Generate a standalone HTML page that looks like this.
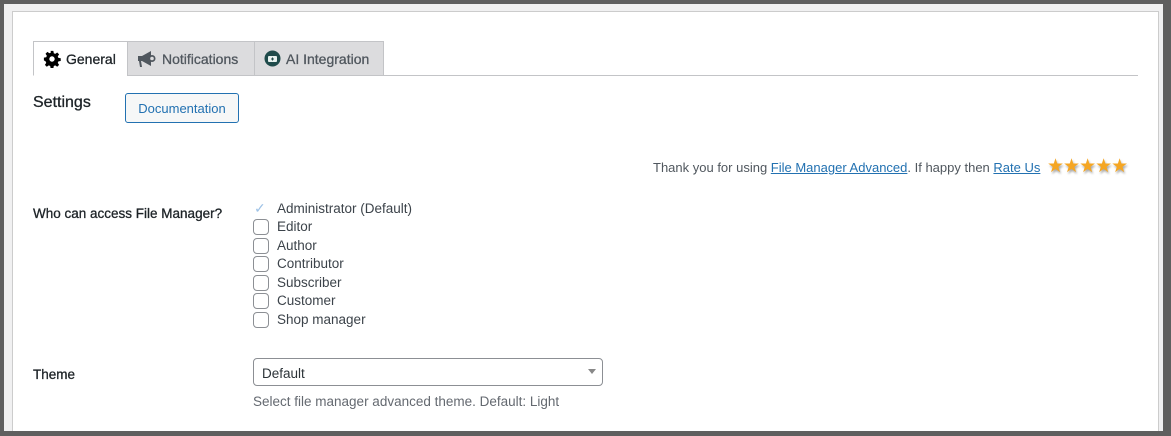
<!DOCTYPE html>
<html><head><style>
*{box-sizing:border-box;margin:0;padding:0}
html,body{width:1171px;height:436px;overflow:hidden}
body{background:#5f5f5f;font-family:"Liberation Sans",sans-serif;font-size:13px;color:#3c434a;position:relative}
.bg{position:absolute;left:4px;top:4px;width:1159px;height:427px;background:#f0f0f1;overflow:hidden}
.panel{position:absolute;left:8px;top:7px;width:1147px;height:430px;background:#fff;border:1px solid #ccc}
.tabline{position:absolute;left:33px;top:75px;width:1105px;height:1px;background:#c3c4c7}
.tab{position:absolute;top:41px;height:35px;border:1px solid #c3c4c7;background:#dcdcde;font-size:14px;color:#50575e;display:flex;align-items:center;padding-left:9px;gap:5px}
.tab.act{background:#fff;border-bottom-color:#fff;color:#1d2327}
.abs{position:absolute}
.btn{position:absolute;left:125px;top:93px;width:114px;height:30px;border:1px solid #2271b1;border-radius:3px;background:#f6f7f7;color:#2271b1;font-size:13px;display:flex;align-items:center;justify-content:center}
.cb{position:absolute;left:253px;width:16px;height:16px;border:1px solid #8c8f94;border-radius:4px;background:#fff}
.lbl{position:absolute;left:277px;font-size:13.5px;color:#3c434a}
.h{position:absolute;left:33px;font-size:13.5px;color:#1d2327;-webkit-text-stroke:0.3px #1d2327}
a{color:#2271b1}
</style></head><body>
<div class="bg"><div class="panel"></div></div>
<div class="tabline"></div>
<div class="tab act" style="left:33px;width:95px"><svg width="18" height="18" viewBox="0 0 20 20"><path fill="#000" d="M8.5 1h3l.5 2.6 1.6.7 2.2-1.5 2.1 2.1-1.5 2.2.7 1.6 2.6.5v3l-2.6.5-.7 1.6 1.5 2.2-2.1 2.1-2.2-1.5-1.6.7-.5 2.6h-3l-.5-2.6-1.6-.7-2.2 1.5-2.1-2.1 1.5-2.2-.7-1.6L1 11.5v-3l2.6-.5.7-1.6-1.5-2.2 2.1-2.1 2.2 1.5 1.6-.7zM10 7a3 3 0 100 6 3 3 0 000-6z"/></svg><span style="-webkit-text-stroke:0.3px #1d2327">General</span></div>
<div class="tab" style="left:127px;width:128px"><svg width="20" height="18" viewBox="0 0 20 18"><path fill="#50575e" d="M1 6h4l9-5v15l-9-5H4l1 6H3l-1-6H1z"/><circle cx="15" cy="8.5" r="3.5" fill="#50575e"/><circle cx="15" cy="8.5" r="1.8" fill="#dcdcde"/></svg><span style="-webkit-text-stroke:0.3px #50575e">Notifications</span></div>
<div class="tab" style="left:254px;width:130px"><svg width="17" height="17" viewBox="0 0 17 17"><circle cx="8.5" cy="8.5" r="8" fill="#1f4b4b"/><rect x="4" y="6" width="9" height="6" rx="1" fill="#e8f2ef"/><path d="M7 9h3M8.5 7.5v3" stroke="#1f4b4b" stroke-width="1"/></svg><span style="-webkit-text-stroke:0.3px #50575e">AI Integration</span></div>
<div class="abs" style="left:33px;top:94px;font-size:16px;color:#1d2327;-webkit-text-stroke:0.3px #1d2327">Settings</div>
<div class="btn">Documentation</div>
<div class="abs" style="left:653px;top:160px;font-size:13px;color:#50575e">Thank you for using <a href="#">File Manager Advanced</a>. If happy then <a href="#">Rate Us </a></div>
<div class="abs" style="left:1047px;top:155px;font-size:19px;color:#f5a623;letter-spacing:-1px;text-shadow:1px 2px 2px rgba(0,0,0,.35)">★★★★★</div>
<div class="h" style="top:206px">Who can access File Manager?</div>
<div class="abs" style="left:254px;top:200px;color:#9ec2e6;font-size:14px">✓</div>
<div class="lbl" style="top:201px">Administrator (Default)</div>
<div class="cb" style="top:219px"></div><div class="lbl" style="top:219px">Editor</div>
<div class="cb" style="top:238px"></div><div class="lbl" style="top:238px">Author</div>
<div class="cb" style="top:256px"></div><div class="lbl" style="top:256px">Contributor</div>
<div class="cb" style="top:275px"></div><div class="lbl" style="top:275px">Subscriber</div>
<div class="cb" style="top:293px"></div><div class="lbl" style="top:293px">Customer</div>
<div class="cb" style="top:312px"></div><div class="lbl" style="top:312px">Shop manager</div>
<div class="h" style="top:367px">Theme</div>
<div class="abs" style="left:253px;top:358px;width:350px;height:28px;border:1px solid #8c8f94;border-radius:4px;padding:7px 8px;font-size:13.5px;color:#2c3338">Default<span style="position:absolute;right:6px;top:10px;width:0;height:0;border-left:4px solid transparent;border-right:4px solid transparent;border-top:5px solid #888"></span></div>
<div class="abs" style="left:253px;top:394px;font-size:13.5px;color:#646970">Select file manager advanced theme. Default: Light</div>
</body></html>
